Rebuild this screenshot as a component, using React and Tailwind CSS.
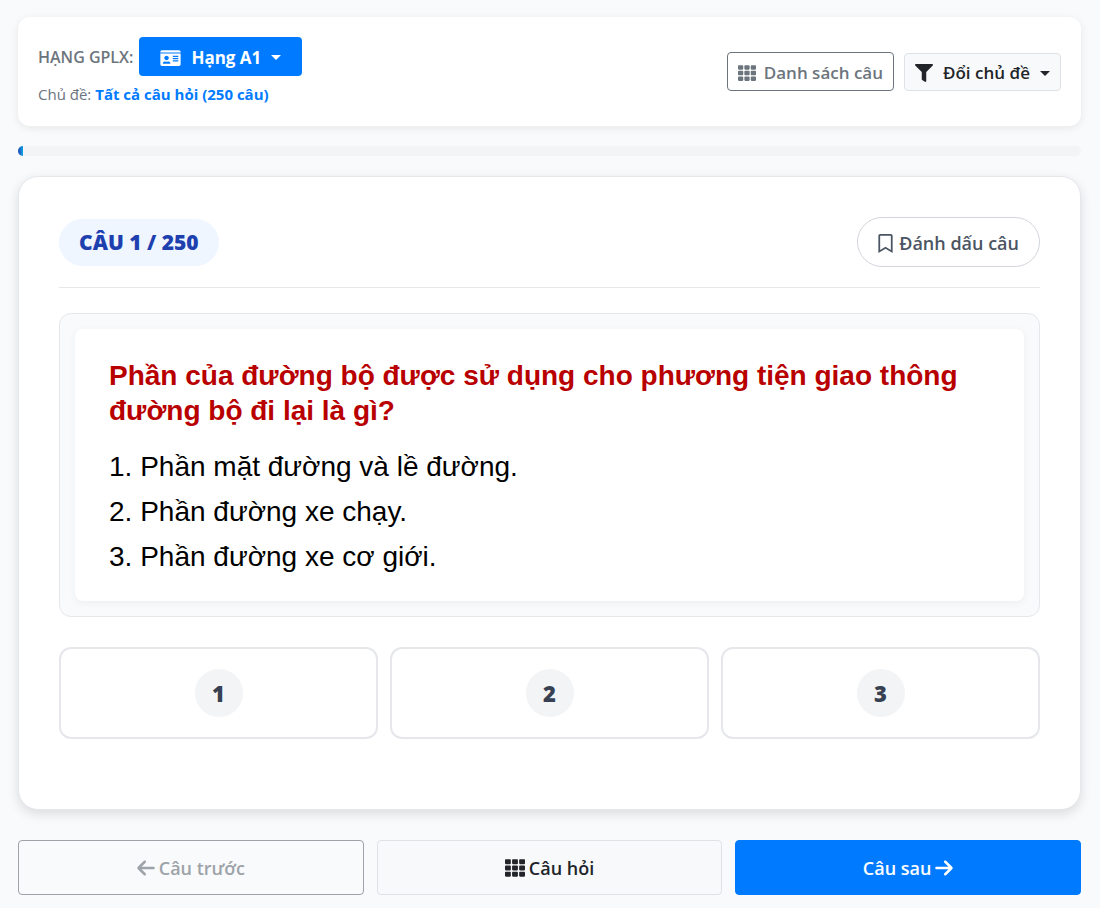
import { FaIdCard, FaTh, FaFilter, FaRegBookmark } from "react-icons/fa";
import { FaArrowLeft, FaArrowRight } from "react-icons/fa6";

const answers = [
  "Phần mặt đường và lề đường.",
  "Phần đường xe chạy.",
  "Phần đường xe cơ giới.",
];

function Caret() {
  return (
    <svg viewBox="0 0 10 5" className="h-[5px] w-[10px]" fill="currentColor" aria-hidden="true">
      <path d="M0 0h10L5 5z" />
    </svg>
  );
}

function Header() {
  return (
    <header className="flex items-start justify-between rounded-xl bg-white p-5 shadow-[0_2px_8px_rgba(0,0,0,0.08)]">
      <div>
        <div className="flex items-center gap-1.5">
          <span className="text-base font-semibold text-[#6c757d]">HẠNG GPLX:</span>
          <button className="flex h-[39px] items-center gap-2.5 rounded bg-[#007bff] px-[21px] pt-0.5 text-[17px] font-bold text-white">
            <FaIdCard className="h-[18px] w-[21px]" />
            Hạng A1
            <Caret />
          </button>
        </div>
        <p className="mt-1.5 text-[15px] leading-6 text-[#6c757d]">
          Chủ đề: <strong className="font-bold text-[#007bff]">Tất cả câu hỏi (250 câu)</strong>
        </p>
      </div>
      <div className="mt-[15px] flex items-end gap-2.5">
        <button className="flex h-[39px] items-center gap-2 rounded border border-[#6c757d] px-2.5 pt-0.5 text-[17px] font-semibold text-[#6c757d]">
          <FaTh className="size-[18px]" />
          Danh sách câu
        </button>
        <button className="flex h-[38px] items-center gap-2.5 rounded border border-[#dee2e6] bg-[#f8f9fa] px-2.5 pt-0.5 text-[17px] font-semibold text-[#212529]">
          <FaFilter className="size-[18px]" />
          Đổi chủ đề
          <Caret />
        </button>
      </div>
    </header>
  );
}

function Question() {
  return (
    <main className="mt-5 rounded-[20px] border border-[#e5e7eb] bg-white px-10 pt-10 pb-[70px] shadow-[0_4px_12px_rgba(0,0,0,0.12)]">
      <div className="flex items-center justify-between border-b border-[#e5e7eb] pb-5">
        <h1 className="flex h-[47px] items-center rounded-full bg-[#eff6ff] px-5 pt-0.5 text-[21px] font-extrabold text-[#1e40af]">
          CÂU 1 / 250
        </h1>
        <button className="flex h-[50px] items-center gap-1.5 rounded-full border border-[#d1d5db] px-5 pt-0.5 text-lg font-semibold text-[#4b5563]">
          <FaRegBookmark className="h-[19px] w-[15px]" />
          Đánh dấu câu
        </button>
      </div>
      <section className="mt-[25px] rounded-xl border border-[#e5e7eb] bg-[#f9fafb] p-[15px]">
        <div className="rounded-lg bg-white px-[34px] pt-[29px] pb-[22px] font-['Liberation_Sans',Arial,sans-serif] shadow-[0_2px_8px_rgba(0,0,0,0.05)]">
          <h2 className="text-[28px] leading-[35px] font-bold text-[#b90000]">
            Phần của đường bộ được sử dụng cho phương tiện giao thông{" "}
            <br />
            đường bộ đi lại là gì?
          </h2>
          <ol className="mt-4 text-[28px] leading-[45px] text-black">
            {answers.map((answer, i) => (
              <li key={answer}>{i + 1}. {answer}</li>
            ))}
          </ol>
        </div>
      </section>
      <div className="mt-[30px] grid grid-cols-3 gap-3">
        {answers.map((answer, i) => (
          <button
            key={answer}
            className="flex h-[92px] items-center justify-center rounded-xl border-2 border-[#e5e7eb] bg-white"
          >
            <span className="flex size-12 items-center justify-center rounded-full bg-[#f3f4f6] text-[22px] font-extrabold text-[#374151]">
              {i + 1}
            </span>
          </button>
        ))}
      </div>
    </main>
  );
}

function Footer() {
  const base = "flex h-[55px] items-center justify-center gap-1 rounded border text-lg font-semibold";
  return (
    <nav className="mt-[30px] grid grid-cols-3 gap-[13px]">
      <button disabled className={`${base} border-[#6c757d] text-[#6c757d] opacity-65`}>
        <FaArrowLeft className="h-5 w-[18px]" />
        Câu trước
      </button>
      <button className={`${base} border-[#dee2e6] bg-[#f8f9fa] text-[#212529]`}>
        <FaTh className="size-5" />
        Câu hỏi
      </button>
      <button className={`${base} border-[#007bff] bg-[#007bff] text-white`}>
        Câu sau
        <FaArrowRight className="h-5 w-[18px]" />
      </button>
    </nav>
  );
}

export default function App() {
  return (
    <div className="min-h-screen bg-[#f9fafb] pt-[17px] pr-[19px] pb-[13px] pl-[18px] font-['Open_Sans','Noto_Sans',sans-serif]">
      <Header />
      <div
        role="progressbar"
        aria-valuenow={1}
        aria-valuemin={0}
        aria-valuemax={250}
        className="mt-5 h-2.5 overflow-hidden rounded-full bg-[#f3f4f6]"
      >
        <div className="h-full w-[5px] bg-linear-to-r from-[#1e40af] to-[#0ea5e9]" />
      </div>
      <Question />
      <Footer />
    </div>
  );
}
